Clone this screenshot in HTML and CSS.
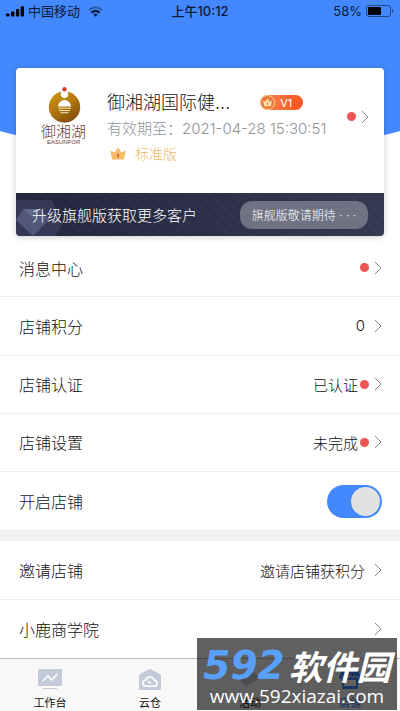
FILE: index.html
```html
<!DOCTYPE html>
<html lang="zh-CN">
  <head>
    <meta charset="UTF-8">
    <meta name="viewport" content="width=device-width, initial-scale=1">
    <title>店铺</title>
    <link rel="stylesheet" href="styles.css">
  </head>
  <body>
    <div class="page">
      <header class="top">
        <div class="status">
          <div class="status-left">
            <svg width="18" height="11" viewBox="0 0 18 11"><path d="M0 8.500q0-1 1-1h1.500q1 0 1 1v1q0 1-1 1H1q-1 0-1-1zM5 6.500q0-1 1-1h1.500q1 0 1 1v3q0 1-1 1H6q-1 0-1-1zM10 4q0-1 1-1h1.200q1 0 1 1v5.500q0 1-1 1H11q-1 0-1-1zM14.600 1.200q0-1 1-1h1.400q1 0 1 1v8.300q0 1-1 1h-1.400q-1 0-1-1z"/></svg>
            <span>中国移动</span>
            <svg class="wifi" width="15" height="11" viewBox="0 0 15 11" fill="none" stroke="#0b1a3a" stroke-width="2"><path d="M1 4.200Q7.500-1.800 14 4.200" stroke="#2b59ad"/><path d="M3.400 6.800Q7.500 3 11.600 6.800"/><path d="M5.300 8.400Q7.500 6.600 9.700 8.400L7.500 10.800z" fill="#0b1a3a" stroke="none"/></svg>
          </div>
          <span class="status-time">上午10:12</span>
          <div class="status-right">
            <span>58%</span>
            <svg width="28" height="12" viewBox="0 0 28 12"><rect x=".5" y=".5" width="24" height="11" rx="2.500" fill="none" stroke="#23478c"/><rect x="2" y="2" width="13" height="8" rx="1"/><path d="M26 4q1.500.5 1.500 2T26 8z" fill="#23478c"/></svg>
          </div>
        </div>
        <section class="card">
          <a class="shop" href="#">
            <svg class="logo" width="50" height="60" viewBox="0 0 50 60">
              <defs>
                <linearGradient id="gold" x1="0" y1="0" x2="0.600" y2="1"><stop offset="0" stop-color="#d19a16"/><stop offset=".5" stop-color="#b67b10"/><stop offset="1" stop-color="#83500d"/></linearGradient>
              </defs>
              <circle cx="24.500" cy="20" r="15.700" fill="url(#gold)"/>
              <circle cx="24.500" cy="7.300" r="3.700" fill="#fff"/>
              <circle cx="24.500" cy="2.200" r="2.200" fill="#d6402c"/>
              <path d="M18 19.500a6.500 6.500 0 0 1 13 0z" fill="#fff"/>
              <path d="M18 21.200h13M19 23.500h11M20.500 25.700h8" stroke="#f6e6bd" stroke-width="1"/>
              <text class="logo-name" x="1" y="50">御湘湖</text>
              <text class="logo-sub" x="7" y="57">EASUNFOR</text>
            </svg>
            <div class="info">
              <div class="name-line">
                <h1>御湘湖国际健...</h1>
                <span class="level">
                  <svg width="15" height="15" viewBox="0 0 15 15"><circle cx="7.500" cy="7.500" r="7" fill="#e7793d" stroke="#ffd096"/><path d="M3 5.500l2.300 1.300L7.500 3.500l2.200 3.300L12 5.500l-1.200 5.800H4.200z" fill="#ffe1ab"/><path d="M7.500 7.300v2.500" stroke="#e7793d"/></svg>
                  V1
                </span>
              </div>
              <p class="expire">有效期至：<span>2021-04-28 15:30:51</span></p>
              <p class="edition">
                <svg width="16" height="13" viewBox="0 0 16 13"><path d="M.5 3.500l4 2L8 .5l3.500 5 4-2L14 12.500H2z" fill="#f5bd68"/><path d="M8 6l1.300 2.500L8 11 6.700 8.500z" fill="#e35d29"/></svg>
                标准版
              </p>
            </div>
            <i class="dot"></i>
            <svg class="arrow" width="8" height="14" viewBox="0 0 8 14"><path d="M1 1l6 6-6 6"/></svg>
          </a>
          <div class="upgrade">
            <svg class="gem" width="48" height="36" viewBox="0 0 48 36"><path d="M0 0h36l10 24-6 12H0z" fill="#b7b0ff" opacity=".12"/><path d="M7 9h18l8 11-16 16L0 20z" fill="#b7c5ff" opacity=".22"/><path d="M7 9h18l-8 9z" fill="#fff" opacity=".1"/></svg>
            <span class="upgrade-text">升级旗舰版获取更多客户</span>
            <button type="button">旗舰版敬请期待 · · ·</button>
          </div>
        </section>
      </header>

      <nav class="list list-shop">
        <a class="row" href="#">
          <span class="label">消息中心</span>
          <i class="dot"></i>
          <svg class="arrow" width="8" height="14" viewBox="0 0 8 14"><path d="M1 1l6 6-6 6"/></svg>
        </a>
        <a class="row" href="#">
          <span class="label">店铺积分</span>
          <span class="value">0</span>
          <svg class="arrow" width="8" height="14" viewBox="0 0 8 14"><path d="M1 1l6 6-6 6"/></svg>
        </a>
        <a class="row" href="#">
          <span class="label">店铺认证</span>
          <span class="value">已认证</span>
          <i class="dot"></i>
          <svg class="arrow" width="8" height="14" viewBox="0 0 8 14"><path d="M1 1l6 6-6 6"/></svg>
        </a>
        <a class="row" href="#">
          <span class="label">店铺设置</span>
          <span class="value">未完成</span>
          <i class="dot"></i>
          <svg class="arrow" width="8" height="14" viewBox="0 0 8 14"><path d="M1 1l6 6-6 6"/></svg>
        </a>
        <div class="row">
          <label class="label" for="shop-open">开启店铺</label>
          <input class="switch" type="checkbox" id="shop-open" checked>
        </div>
      </nav>
      <nav class="list list-invite">
        <a class="row" href="#">
          <span class="label">邀请店铺</span>
          <span class="value">邀请店铺获积分</span>
          <svg class="arrow" width="8" height="14" viewBox="0 0 8 14"><path d="M1 1l6 6-6 6"/></svg>
        </a>
        <a class="row" href="#">
          <span class="label">小鹿商学院</span>
          <svg class="arrow" width="8" height="14" viewBox="0 0 8 14"><path d="M1 1l6 6-6 6"/></svg>
        </a>
      </nav>

      <nav class="tabs">
        <a href="#">
          <svg width="24" height="22" viewBox="0 0 24 22"><rect width="24" height="17" rx="1" fill="#c3cbd8"/><path d="M4.500 12l5.500-5 3.500 4L19.500 5" fill="none" stroke="#fff" stroke-width="1.600"/><path d="M5 19.500h14" stroke="#c3cbd8"/></svg>
          工作台
        </a>
        <a href="#">
          <svg width="24" height="22" viewBox="0 0 24 22"><path d="M12 0l10 5q1 .5 1 1.500V20q0 1-1 1H2q-1 0-1-1V6.500Q1 5.500 2 5z" fill="#c3cbd8"/><path d="M8 17.200a3 3 0 0 1-.3-6 4.500 4.500 0 0 1 8.600 0 3 3 0 0 1-.3 6zM9.500 12.500q2.500 0 3 2.300" fill="none" stroke="#fff" stroke-width="1.500"/></svg>
          云仓
        </a>
        <a href="#">
          <svg width="24" height="22" viewBox="0 0 24 22"><path d="M12 0l10 9-14 9-6-7z" fill="#c3cbd8"/></svg>
          活动
        </a>
        <a class="active" href="#">
          <svg width="24" height="22" viewBox="0 0 24 22"><path d="M4 1h16l3 7q-1 3-3 3v9H4v-9q-2 0-3-3z" fill="#4388fd"/><path d="M3 7q2 3 4.500 0 2 3 4.500 0 2 3 4.500 0 2 3 4.500 0" fill="none" stroke="#fff"/><path d="M6 11h12v6H6z" fill="#fff"/></svg>
          店铺
        </a>
      </nav>

      <div class="watermark">
        <div class="mark-name"><span class="mark-num">592</span>软件园</div>
        <div class="mark-url">www.592xiazai.com</div>
      </div>
    </div>
  </body>
</html>
```

FILE: styles.css
```css
* {
    box-sizing: border-box;
}

body {
    margin: 0;
    font-family: Inter, "Noto Sans CJK SC", sans-serif;
    color: #111;
}

a {
    color: inherit;
    text-decoration: none;
}

svg {
    display: block;
    flex: none;
}

h1, p {
    margin: 0;
    font-weight: 300;
}

.page {
    position: relative;
    min-height: 100vh;
    display: flex;
    flex-direction: column;
    overflow: hidden;
}

/* blue arc behind the card */
.top {
    padding-bottom: 3px;
    background: radial-gradient(circle at 50% -644px, #4388fd 800px, #fff 801px);
}

.status {
    display: grid;
    grid-template-columns: 1fr auto 1fr;
    align-items: center;
    height: 22px;
    padding: 0 6px;
    font-size: 13px;
    line-height: 18px;
    color: #0b1a3a;
}

.status-left, .status-right {
    display: flex;
    align-items: center;
    gap: 4px;
}

.status-right {
    justify-content: flex-end;
}

.wifi {
    margin-left: 4px;
}

.status-time {
    font-weight: 500;
}

.card {
    margin: 46px 16px 0;
    border-radius: 4px;
    background: #fff;
    box-shadow: 0 1px 6px rgba(0, 0, 0, 0.2);
    overflow: hidden;
}

.shop {
    display: flex;
    align-items: center;
    height: 125px;
    padding: 0 15px 28px 24px;
}

.logo-name {
    font-size: 15px;
    font-weight: 300;
    fill: #6b3a30;
}

.logo-sub {
    font-family: "Liberation Sans", sans-serif;
    font-size: 6px;
    fill: #6b3a30;
}

.info {
    flex: 1;
    margin-left: 17px;
    padding-top: 22px;
}

.name-line {
    display: flex;
    align-items: center;
    gap: 30px;
    height: 26px;
}

.name-line h1 {
    font-size: 18px;
    line-height: 26px;
    white-space: nowrap;
}

.level {
    display: flex;
    align-items: center;
    gap: 5px;
    width: 43px;
    height: 15px;
    border-radius: 8px;
    background: linear-gradient(90deg, #f58b50, #f9521f);
    font-size: 11px;
    color: #fff;
}

.expire {
    font-size: 15px;
    line-height: 26px;
    color: #8f949c;
    white-space: nowrap;
}

.edition {
    display: flex;
    align-items: center;
    gap: 9px;
    padding-left: 3px;
    font-size: 14px;
    line-height: 24px;
    color: #efb765;
}

.dot {
    flex: none;
    width: 9px;
    height: 9px;
    border-radius: 50%;
    background: #ee5655;
}

.arrow {
    fill: none;
    stroke: #8a8a8a;
}

.dot + .arrow {
    margin-left: 5px;
}

.upgrade {
    position: relative;
    display: flex;
    align-items: center;
    justify-content: space-between;
    height: 43px;
    padding: 0 16px;
    background: repeating-linear-gradient(45deg, rgba(255, 255, 255, 0) 0 5px, rgba(255, 255, 255, 0.02) 5px 7px), linear-gradient(90deg, #23263d, #343851);
    color: #fff;
}

.gem {
    position: absolute;
    left: 0;
    bottom: 0;
}

.upgrade-text {
    position: relative;
    font-size: 15px;
    font-weight: 300;
}

.upgrade button {
    height: 28px;
    width: 128px;
    padding: 0;
    border: none;
    border-radius: 12px;
    background: #6f7282;
    font-family: inherit;
    font-size: 12px;
    font-weight: 300;
    color: #fff;
    white-space: nowrap;
}

.list {
    display: flex;
    flex-direction: column;
}

.list-shop {
    flex: 5 0 auto;
    border-bottom: 11px solid #f2f2f2;
}

.list-invite {
    flex: 2 0 auto;
}

.row {
    flex: 1 0 58px;
    display: flex;
    align-items: center;
    padding: 0 18px 0 19px;
    border-bottom: 1px solid #ececec;
}

.row:last-child {
    border-bottom: none;
}

.label {
    margin-right: auto;
    font-size: 16px;
    font-weight: 300;
}

.value {
    font-size: 15px;
    font-weight: 300;
}

.value + .arrow {
    margin-left: 9px;
}

.value + .dot {
    margin-left: 2px;
}

.switch {
    appearance: none;
    width: 55px;
    height: 33px;
    margin: 0;
    padding: 2px;
    border-radius: 17px;
    background: #ccc;
}

.switch::before {
    content: "";
    display: block;
    width: 29px;
    height: 29px;
    border-radius: 50%;
    background: #e2e2e2;
}

.switch:checked {
    background: #4388fd;
}

.switch:checked::before {
    margin-left: auto;
}

.tabs {
    display: flex;
    height: 53px;
    border-top: 1px solid #bbb;
    background: #f8f8f8;
}

.tabs a {
    flex: 1;
    display: flex;
    flex-direction: column;
    align-items: center;
    gap: 4px;
    padding-top: 10px;
    font-size: 11px;
    line-height: 16px;
}

.tabs .active {
    color: #4388fd;
}

.watermark {
    position: absolute;
    right: 3px;
    bottom: 1px;
    width: 200px;
    height: 72px;
    background: rgba(0, 0, 0, 0.62);
    color: #fff;
    text-align: center;
    white-space: nowrap;
}

.mark-name {
    display: flex;
    align-items: center;
    justify-content: center;
    gap: 4px;
    padding-top: 8px;
    font-family: "Noto Sans CJK SC", sans-serif;
    font-size: 34px;
    font-weight: 700;
    font-style: italic;
    line-height: 40px;
}

.mark-num {
    font-family: "DejaVu Sans", sans-serif;
    font-size: 39px;
    font-weight: bold;
    color: #58a0fb;
}

.mark-url {
    font-family: "Open Sans", sans-serif;
    font-size: 19px;
    line-height: 20px;
}
```
